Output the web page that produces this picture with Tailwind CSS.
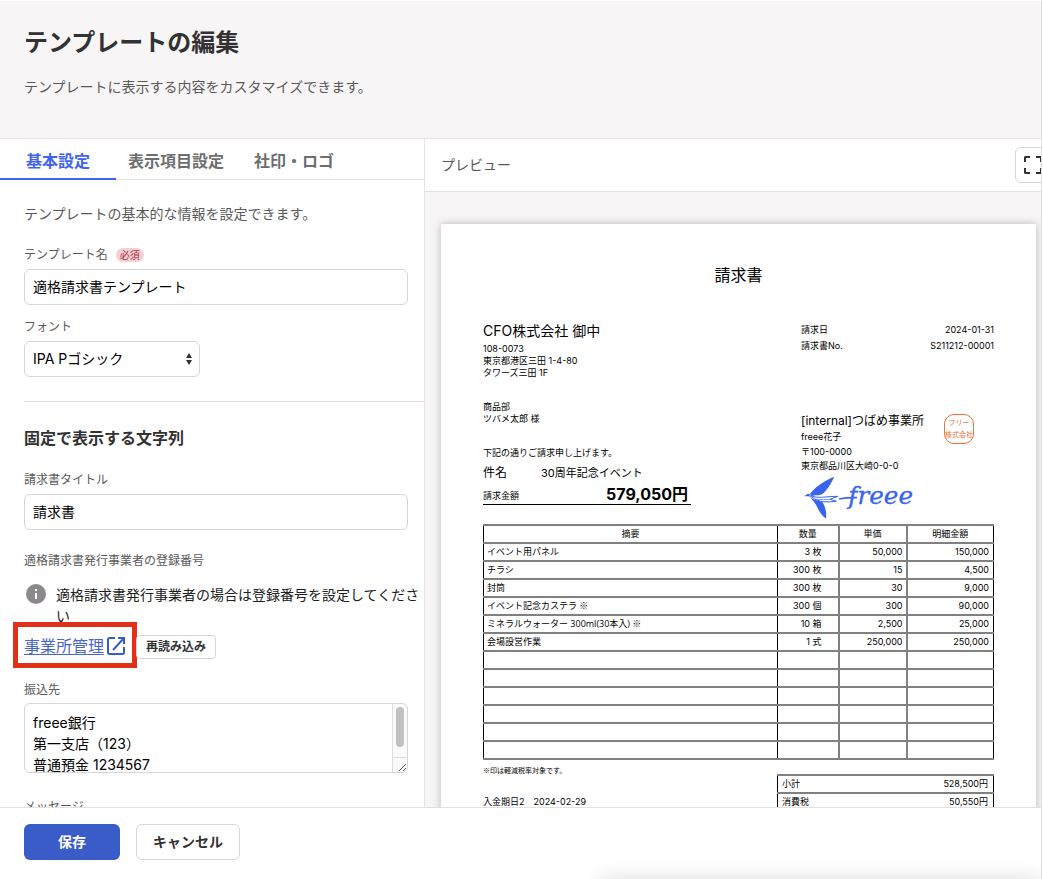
<!DOCTYPE html>
<html lang="ja">

<head>
    <meta charset="UTF-8">
    <meta name="viewport" content="width=device-width, initial-scale=1.0">
    <title>テンプレートの編集</title>
    <script src="https://cdn.jsdelivr.net/npm/@tailwindcss/browser@4"></script>
</head>

<body class="bg-white font-['Inter','Noto_Sans_CJK_JP',sans-serif] text-sm text-[#323232]">
    <div class="mr-px flex h-screen flex-col overflow-hidden border-t border-r border-t-white border-r-[#e1dfe0]">
        <!-- Page header -->
        <header class="h-[138px] shrink-0 border-b border-[#e5e3e4] bg-[#f7f5f6] px-6 pt-6">
            <h1 class="text-2xl leading-9 font-bold">テンプレートの編集</h1>
            <p class="mt-[15px] leading-[21px] text-[#595959]">テンプレートに表示する内容をカスタマイズできます。</p>
        </header>

        <main class="flex min-h-0 flex-1">
            <!-- Settings -->
            <section class="w-[425px] shrink-0 overflow-hidden border-r border-[#e5e3e4]">
                <nav class="flex h-[41px] border-b border-[#e5e3e4] text-base font-bold text-[#6e6e6e]">
                    <a href="#basic" class="-mb-px flex items-center border-b-2 border-[#3f65f0] px-[26px] pt-1 text-[#3f65f0]">基本設定</a>
                    <a href="#items" class="flex items-center pt-1 pr-[15px] pl-3">表示項目設定</a>
                    <a href="#logo" class="flex items-center px-[15px] pt-1">社印・ロゴ</a>
                </nav>

                <form id="templateForm" class="pl-6">
                    <p class="mt-[23px] leading-[21px] text-[#595959]">テンプレートの基本的な情報を設定できます。</p>

                    <div class="mt-[22px] mr-4">
                        <div class="flex items-center gap-2 pb-[5px]">
                            <label for="templateName" class="text-xs leading-[18px] text-[#595959]">テンプレート名</label>
                            <span class="rounded-full bg-[#f4cfd3] px-1 text-[10px] leading-[14px] text-[#a8323f]">必須</span>
                        </div>
                        <input type="text" id="templateName" value="適格請求書テンプレート"
                            class="block h-9 w-full rounded-md border border-[#d7d6d7] px-2 pb-0.5 text-black">
                    </div>

                    <div class="mt-[13px]">
                        <label for="font" class="block pb-[5px] text-xs leading-[18px] text-[#595959]">フォント</label>
                        <div class="relative w-44">
                            <select id="font" class="block h-9 w-full appearance-none rounded-md border border-[#d7d6d7] bg-white px-2 text-black">
                                <option>IPA Pゴシック</option>
                            </select>
                            <svg class="pointer-events-none absolute top-3 right-2 h-3 w-[6px]" viewBox="0 0 6 12" fill="#323232">
                                <path d="M3 0 6 5H0zM3 12 0 7h6z" />
                            </svg>
                        </div>
                    </div>

                    <hr class="mt-6 border-[#e1dfe0]">

                    <h2 class="mt-6 text-base leading-6 font-bold">固定で表示する文字列</h2>

                    <div class="mt-[21px] mr-4">
                        <label for="invoiceTitle" class="block pb-[5px] text-xs leading-[18px] text-[#595959]">請求書タイトル</label>
                        <input type="text" id="invoiceTitle" value="請求書"
                            class="block h-9 w-full rounded-md border border-[#d7d6d7] px-2 pb-0.5 text-black">
                    </div>

                    <h3 class="mt-[22px] text-xs leading-[18px] text-[#595959]">適格請求書発行事業者の登録番号</h3>
                    <div class="mt-[14px] flex gap-2 leading-[21px] text-[#202020]">
                        <svg class="h-6 w-6 shrink-0" viewBox="0 0 24 24">
                            <circle cx="12" cy="10" r="10" fill="#8c898c" />
                            <path d="M11 5h2v2h-2zM11 9h2v6h-2z" fill="#fff" />
                        </svg>
                        <p>適格請求書発行事業者の場合は登録番号を設定してください</p>
                    </div>

                    <div class="relative -mt-1 -ml-[11px] flex items-center">
                        <div class="flex h-[46px] w-[124px] items-center gap-0.5 border-5 border-[#e23018] pt-0.5 pl-1.5">
                            <a href="#office" class="text-base leading-6 text-[#4766cc] underline underline-offset-2">事業所管理</a>
                            <svg class="h-5 w-5" viewBox="0 0 20 20" fill="none" stroke="#3a5cc8" stroke-width="2">
                                <path d="M9 2H3.500Q2 2 2 3.500V16.500Q2 18 3.500 18H16.500Q18 18 18 16.500V11M12 2H18V8M18 2 7 14" />
                            </svg>
                        </div>
                        <button type="button" class="mt-1 -ml-px h-6 rounded-sm border border-[#d7d6d7] px-[9px] text-xs font-bold">再読み込み</button>
                    </div>

                    <div class="mt-[13px] mr-4">
                        <label for="bank" class="block pb-1 text-xs leading-[18px] text-[#595959]">振込先</label>
                        <div class="relative">
                            <textarea id="bank"
                                class="block h-[70px] w-full resize-none overflow-hidden rounded-md border border-[#d7d6d7] px-2 py-2 leading-[21px] text-black">freee銀行
第一支店（123）
普通預金 1234567
カ）シーエフオー</textarea>
                            <div class="absolute inset-y-px right-px flex w-[15px] flex-col rounded-r-md border-l border-[#dedede] bg-[#fafafa]">
                                <div class="mx-auto mt-[3px] h-10 w-2 rounded-full bg-[#c1c1c1]"></div>
                                <svg class="mt-auto h-[15px] w-full border-t border-[#dedede]" viewBox="0 0 14 14" stroke="#555" stroke-width="1">
                                    <path d="M6 13 13 6M10 13l3-3" />
                                </svg>
                            </div>
                        </div>
                    </div>

                    <div class="mt-[25px] mr-4">
                        <label for="message" class="block pb-[5px] text-xs leading-[18px] text-[#595959]">メッセージ</label>
                        <textarea id="message" class="block h-[70px] w-full rounded-md border border-[#d7d6d7]"></textarea>
                    </div>
                </form>
            </section>

            <!-- Preview -->
            <section class="flex min-w-0 flex-1 flex-col overflow-hidden bg-[#f7f5f6]">
                <div class="flex h-[53px] shrink-0 items-center justify-between border-b border-[#e1dfe0] bg-white pl-4">
                    <h2 class="text-[#595959]">プレビュー</h2>
                    <button type="button" aria-label="全画面表示"
                        class="-mr-[10px] flex h-9 w-9 items-center justify-center rounded-md border border-[#d7d6d7]">
                        <svg class="h-[18px] w-[18px]" viewBox="0 0 18 18" fill="none" stroke="#323232" stroke-width="2">
                            <path d="M1 6V1.500L1.500 1H6M12 1H16.500L17 1.500V6M17 12v4.500L16.500 17H12M6 17H1.500L1 16.500V12" />
                        </svg>
                    </button>
                </div>

                <div class="min-h-0 flex-1 pt-8 pr-[5px] pl-4">
                    <article class="h-[842px] bg-white px-[42px] pt-[39px] text-[9px] leading-3 text-black shadow-[0_0_8px_rgba(0,0,0,0.25)]">
                        <h3 class="text-center text-base leading-6">請求書</h3>

                        <div class="mt-[35px] flex justify-between">
                            <div class="w-[208px]">
                                <p class="text-sm leading-[18px]">CFO株式会社 御中</p>
                                <p class="mt-[3px]">108-0073<br>東京都港区三田 1-4-80<br>タワーズ三田 1F</p>
                                <p class="mt-[22px]">商品部<br>ツバメ太郎 様</p>
                                <p class="mt-[22px]">下記の通りご請求申し上げます。</p>
                                <p class="mt-1.5 flex text-[11px] leading-4"><span class="w-[58px] text-xs leading-4">件名</span>30周年記念イベント</p>
                                <p class="flex h-6 items-end justify-between border-b border-black pr-[3px]">
                                    <span class="pb-0.5">請求金額</span><span class="text-base leading-5 font-bold">579,050円</span>
                                </p>
                            </div>

                            <div class="w-[193px]">
                                <dl class="grid grid-cols-2 leading-4">
                                    <dt>請求日</dt>
                                    <dd class="text-right">2024-01-31</dd>
                                    <dt>請求書No.</dt>
                                    <dd class="text-right">S211212-00001</dd>
                                </dl>
                                <div class="relative mt-[59px]">
                                    <p class="text-xs leading-4">[internal]つばめ事業所</p>
                                    <p class="leading-4">freee花子</p>
                                    <p class="leading-[14px]">〒100-0000<br>東京都品川区大崎0-0-0</p>
                                    <div class="absolute top-px right-5 flex h-[30px] w-[30px] flex-col items-center justify-center rounded-[10px] border border-[#e8713c] text-[7px] leading-3 text-[#e8713c]">
                                        <span>フリー</span><span>株式会社</span>
                                    </div>
                                </div>
                                <svg class="mt-0.5 -ml-[5px] h-[45px] w-[124px]" viewBox="0 15 372 135" fill="#3864f0">
                                    <!-- wings -->
                                    <path d="M115 20C90 30 60 48 44 69L40 76C54 77 68 77 78 73C94 60 105 40 115 20Z" />
                                    <path d="M41 80C50 92 60 101 65 114C71 128 79 138 90 146C92 126 88 106 78 95C68 92 52 90 41 80Z" />
                                    <!-- head, body and tail -->
                                    <path d="M25 79 34 72Q42 69 50 74L56 83Q44 82 38 79Z" />
                                    <path d="M44 76C58 84 74 82 88 81Q108 79 126 79L102 88 121 94Q98 97 78 95 60 92 44 79" fill="#fff" stroke="#3864f0" stroke-width="3" />
                                    <path d="M60 88Q82 90 103 88" fill="none" stroke="#3864f0" stroke-width="2" />
                                    <circle cx="42" cy="75" r="2" fill="#fff" />
                                    <path d="M129 87Q155 82 183 83" fill="none" stroke="#3864f0" stroke-width="5" />
                                    <text x="157" y="102" font-family="DejaVu Serif" font-size="74" font-style="italic" stroke="#3864f0" stroke-width="1">freee</text>
                                </svg>
                            </div>
                        </div>

                        <table class="mt-1 w-full table-fixed border-collapse border border-black">
                            <thead>
                                <tr class="h-[18px] border-y-2 border-[#808080]">
                                    <th class="font-normal">摘要</th>
                                    <th class="w-[61px] border-l border-black font-normal">数量</th>
                                    <th class="w-[68px] border-l-2 border-[#808080] font-normal">単価</th>
                                    <th class="w-[87px] border-l-2 border-[#808080] font-normal">明細金額</th>
                                </tr>
                            </thead>
                            <tbody id="invoiceRows"></tbody>
                        </table>

                        <div class="flex justify-between">
                            <div class="pt-1">
                                <p class="font-['Noto_Sans_CJK_JP',sans-serif] text-[7px]">※印は軽減税率対象です。</p>
                                <p class="mt-5">入金期日2　2024-02-29</p>
                            </div>
                            <table class="mt-[14px] w-[217px] border-collapse border border-black">
                                <tr class="h-[18px] border-y-2 border-[#808080]">
                                    <th class="pl-1 text-left font-normal">小計</th>
                                    <td class="pr-[5px] text-right">528,500円</td>
                                </tr>
                                <tr class="h-[18px] border-y-2 border-[#808080]">
                                    <th class="pl-1 text-left font-normal">消費税</th>
                                    <td class="pr-[5px] text-right">50,550円</td>
                                </tr>
                            </table>
                        </div>
                    </article>
                </div>
            </section>
        </main>

        <!-- Footer -->
        <footer class="relative flex h-[72px] shrink-0 gap-4 overflow-hidden border-t border-[#e1dfe0] bg-white px-6 pt-4">
            <button type="submit" form="templateForm" class="h-9 w-24 rounded-md bg-[#3a5cc8] font-bold text-white">保存</button>
            <button type="button" class="h-9 w-[104px] rounded-md border border-[#d7d6d7] bg-white font-bold">キャンセル</button>
            <div class="absolute top-full right-0 left-[600px] h-4 shadow-[0_0_20px_rgba(0,0,0,0.15)]"></div>
        </footer>
    </div>

    <script>
        const items = [
            ['イベント用パネル', '3 枚', '50,000', '150,000'],
            ['チラシ', '300 枚', '15', '4,500'],
            ['封筒', '300 枚', '30', '9,000'],
            ['イベント記念カステラ ※', '300 個', '300', '90,000'],
            ['ミネラルウォーター 300ml(30本入) ※', '10 箱', '2,500', '25,000'],
            ['会場設営作業', '1 式', '250,000', '250,000'],
        ];

        // 明細は12行固定、足りない分は空行
        let rows = '';
        for (let i = 0; i < 12; i++) {
            const [name, count, price, total] = items[i] || ['', '', '', ''];
            rows += `
                <tr class="h-[18px] border-y-2 border-[#808080]">
                    <td class="pl-[3px] font-['Open_Sans','Noto_Sans_CJK_JP',sans-serif]">${name}</td>
                    <td class="border-l border-black pr-4 text-right">${count}</td>
                    <td class="border-l-2 border-[#808080] pr-[3px] text-right">${price}</td>
                    <td class="border-l-2 border-[#808080] pr-1 text-right">${total}</td>
                </tr>`;
        }
        document.getElementById('invoiceRows').innerHTML = rows;
    </script>
</body>

</html>
